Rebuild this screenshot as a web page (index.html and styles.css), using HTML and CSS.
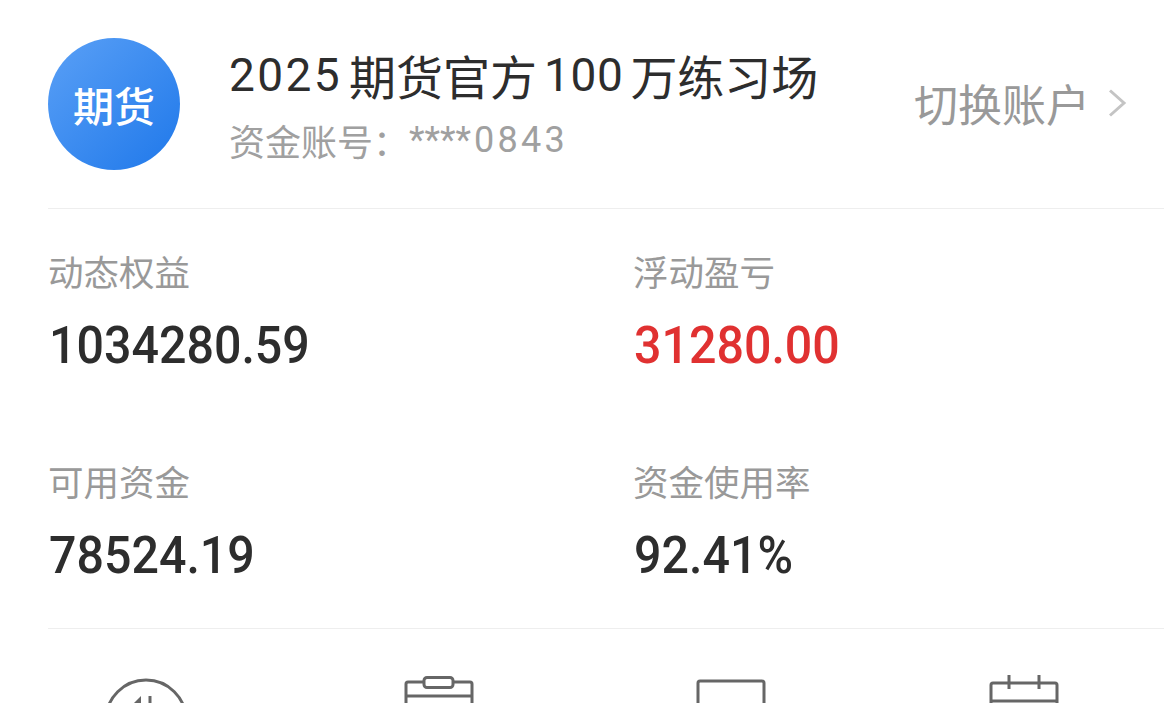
FILE: index.html
```html
<!DOCTYPE html>
<html lang="zh-CN">
<head>
<meta charset="utf-8">
<title>期货账户</title>
<link rel="stylesheet" href="styles.css">
</head>
<body>
<main class="page">
  <header class="account">
    <div class="avatar">期货</div>
    <div class="info">
      <div class="title"><span>2025</span><span>期货官方</span><span class="num-tight">100</span><span>万练习场</span></div>
      <div class="sub"><span class="sub-label">资金账号：</span><span class="stars">****</span><span class="sub-num">0843</span></div>
    </div>
    <div class="switch">
      <span>切换账户</span>
      <svg class="chev" width="20" height="30" viewBox="0 0 20 30"><path d="M3 2.5 17 15 3 27.5" fill="none" stroke="#c4c4c4" stroke-width="3"/></svg>
    </div>
  </header>
  <section class="stats">
    <div class="stat"><div class="label">动态权益</div><div class="value">1034280.59</div></div>
    <div class="stat"><div class="label">浮动盈亏</div><div class="value red">31280.00</div></div>
    <div class="stat"><div class="label">可用资金</div><div class="value">78524.19</div></div>
    <div class="stat"><div class="label">资金使用率</div><div class="value">92.41%</div></div>
  </section>
  <nav class="tools">
    <svg class="tool t1" width="84" height="26" viewBox="0 0 84 26"><g fill="none" stroke="#666" stroke-width="3"><circle cx="42" cy="42" r="40"/><path d="M46 18v8"/><path d="M37 18 29 26h8z" fill="#666" stroke="none"/></g></svg>
    <svg class="tool t2" width="70" height="28" viewBox="0 0 70 28"><g fill="none" stroke="#666" stroke-width="3"><path d="M20 6H4a2 2 0 0 0-2 2v20M50 6h16a2 2 0 0 1 2 2v20M2 20h66"/><rect x="20" y="1.5" width="29" height="10" rx="3"/></g></svg>
    <svg class="tool t3" width="70" height="25" viewBox="0 0 70 25"><g fill="none" stroke="#666" stroke-width="3"><path d="M2 25V4a2 2 0 0 1 2-2h62a2 2 0 0 1 2 2v21"/></g></svg>
    <svg class="tool t4" width="70" height="29" viewBox="0 0 70 29"><g fill="none" stroke="#666" stroke-width="3"><path d="M2 29V10a2 2 0 0 1 2-2h62a2 2 0 0 1 2 2v19M2 26h66M20 0v14M50 0v14"/></g></svg>
  </nav>
</main>
</body>
</html>
```
FILE: styles.css
```css
html, body { margin: 0; padding: 0; background: #fff; }
body { width: 1164px; height: 703px; overflow: hidden; font-family: Roboto, "Noto Sans CJK SC", sans-serif; }
.page { padding-left: 48px; }
.account { height: 170px; border-bottom: 1px solid #eee; display: flex; align-items: flex-start; padding-top: 38px; }
.avatar { width: 132px; height: 132px; border-radius: 50%; background: linear-gradient(135deg, #5aa0f6, #1f78ea); color: #fff; font: 500 41px/132px "Noto Sans CJK SC", sans-serif; text-align: center; flex: none; }
.info { margin-left: 49px; width: 685px; flex: none; }
.title { line-height: 54px; margin-top: 10px; color: #2d2d2d; display: flex; gap: 7px; }
.title span { font-family: "Noto Sans CJK SC", sans-serif; font-size: 47px; }
.title span:nth-child(odd) { font-family: Roboto, sans-serif; font-size: 46px; letter-spacing: 2.4px; }
.title span.num-tight { letter-spacing: 0.6px; }
.sub { color: #a0a0a0; font-size: 36px; line-height: 44px; margin-top: 16px; display: flex; }
.sub-label { font-family: "Noto Sans CJK SC", sans-serif; width: 180px; }
.stars { margin-right: 3px; }
.sub-num { letter-spacing: 3.3px; }
.switch { display: flex; align-items: center; color: #999; font: 44px/60px "Noto Sans CJK SC", sans-serif; margin-top: 35px; gap: 17px; white-space: nowrap; }
.stats { display: grid; grid-template-columns: 585px 1fr; grid-auto-rows: 210px; height: 419px; border-bottom: 1px solid #eee; }
.stat { padding-top: 38px; }
.label { color: #999; font: 35.5px/48px "Noto Sans CJK SC", sans-serif; }
.value { color: #2d2d2d; font: 500 52px/60px Roboto, sans-serif; margin-top: 21px; margin-left: 1px; transform: scaleX(0.93); transform-origin: left center; }
.red { color: #e03131; }
.tools { position: relative; height: 74px; overflow: hidden; }
.tool { position: absolute; }
.t1 { left: 56px; top: 49px; }
.t2 { left: 356px; top: 47px; }
.t3 { left: 648px; top: 50px; }
.t4 { left: 941px; top: 46px; }
```
